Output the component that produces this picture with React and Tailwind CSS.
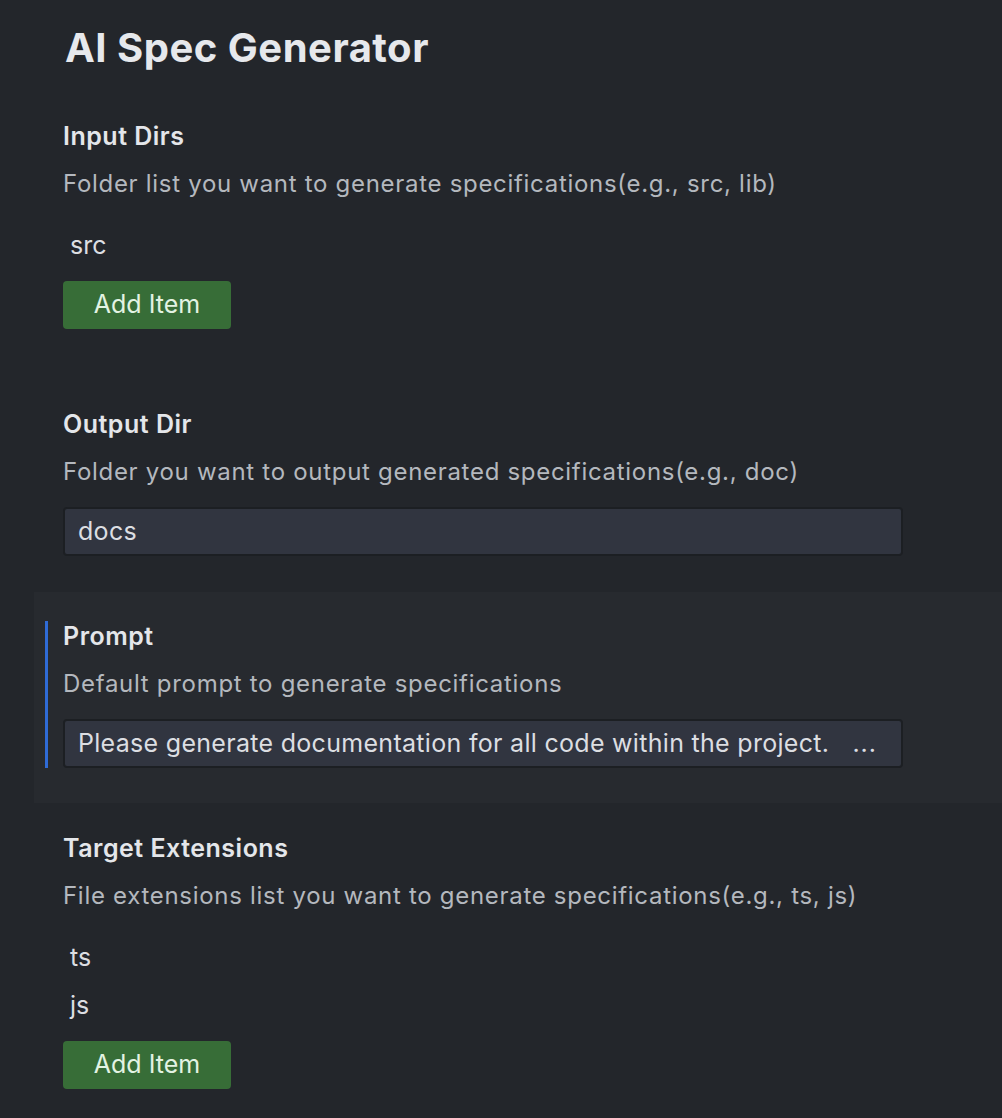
const Label = ({ children }) => (
  <h3 className="text-[25px] leading-[30px] font-semibold tracking-[0.5px] text-[#e4e6ea]">{children}</h3>
);

const Desc = ({ children }) => (
  <p className="mt-[18px] text-[24px] leading-[30px] tracking-[0.7px] text-[#b4b8be]">{children}</p>
);

const AddButton = () => (
  <button className="mt-[11px] h-[48px] w-[168px] rounded-[4px] bg-[#376d37] text-[25px] text-[#e3f3e3]">
    Add Item
  </button>
);

const TextBox = ({ value, more }) => (
  <div className="mt-[20px] flex h-[49px] w-[840px] items-center justify-between rounded-[4px] border-2 border-[#1c1f23] bg-[#313540] pl-[13px] pr-[24px] text-[25px] tracking-[0.3px] text-[#dcdee2]">
    <span>{value}</span>
    {more && <span className="tracking-[1px]">...</span>}
  </div>
);

const ListSetting = ({ label, desc, items }) => (
  <section className="pl-[63px]">
    <Label>{label}</Label>
    <Desc>{desc}</Desc>
    <ul className="mt-[23px]">
      {items.map((item) => (
        <li key={item} className="flex h-[48px] items-center pl-[7px] text-[25px] text-[#dcdee2]">
          {item}
        </li>
      ))}
    </ul>
    <AddButton />
  </section>
);

export default function App() {
  return (
    <div className="min-h-[1118px] bg-[#23262b] pt-[24px] font-['Inter',sans-serif]">
      <h1 className="pl-[65px] text-[40px] leading-[48px] font-bold tracking-[0.5px] text-[#e6e8ec]">
        AI Spec Generator
      </h1>

      <div className="mt-[49px]">
        <ListSetting
          label="Input Dirs"
          desc="Folder list you want to generate specifications(e.g., src, lib)"
          items={["src"]}
        />
      </div>

      {/* Output Dir */}
      <section className="mt-[80px] pl-[63px]">
        <Label>Output Dir</Label>
        <Desc>Folder you want to output generated specifications(e.g., doc)</Desc>
        <TextBox value="docs" />
      </section>

      {/* Prompt (focused row) */}
      <section className="ml-[34px] mt-[36px] bg-[#272a2f] pt-[29px] pb-[35px] pl-[11px]">
        <div className="flex gap-[15px]">
          <div className="w-[3px] shrink-0 bg-[#2f6bd6]" />
          <div>
            <Label>Prompt</Label>
            <Desc>Default prompt to generate specifications</Desc>
            <TextBox value="Please generate documentation for all code within the project." more />
          </div>
        </div>
      </section>

      <div className="mt-[30px] pb-[29px]">
        <ListSetting
          label="Target Extensions"
          desc="File extensions list you want to generate specifications(e.g., ts, js)"
          items={["ts", "js"]}
        />
      </div>
    </div>
  );
}
